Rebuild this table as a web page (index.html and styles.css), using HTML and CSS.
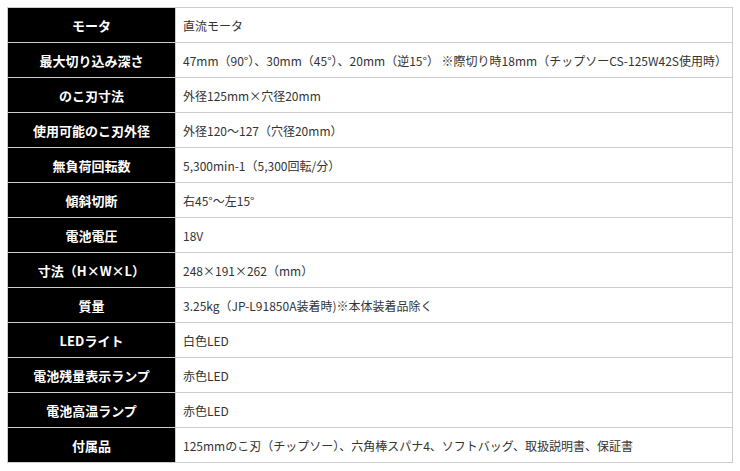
FILE: index.html
```html
<!DOCTYPE html>
<html lang="ja">
<head>
<meta charset="utf-8">
<link rel="stylesheet" href="styles.css">
</head>
<body>
<table class="spec">
<tr><th>モータ</th><td>直流モータ</td></tr>
<tr><th>最大切り込み深さ</th><td>47mm（90°）、30mm（45°）、20mm（逆15°） ※際切り時18mm（チップソーCS-125W42S使用時）</td></tr>
<tr><th>のこ刃寸法</th><td>外径125mm×穴径20mm</td></tr>
<tr><th>使用可能のこ刃外径</th><td>外径120～127（穴径20mm）</td></tr>
<tr><th>無負荷回転数</th><td>5,300min-1（5,300回転/分）</td></tr>
<tr><th>傾斜切断</th><td>右45°～左15°</td></tr>
<tr><th>電池電圧</th><td>18V</td></tr>
<tr><th>寸法（H×W×L）</th><td>248×191×262（mm）</td></tr>
<tr><th>質量</th><td>3.25kg（JP-L91850A装着時)※本体装着品除く</td></tr>
<tr><th>LEDライト</th><td>白色LED</td></tr>
<tr><th>電池残量表示ランプ</th><td>赤色LED</td></tr>
<tr><th>電池高温ランプ</th><td>赤色LED</td></tr>
<tr><th>付属品</th><td>125mmのこ刃（チップソー）、六角棒スパナ4、ソフトバッグ、取扱説明書、保証書</td></tr>
</table>
</body>
</html>
```
FILE: styles.css
```css
html, body {
  margin: 0;
  background: #fff;
}
body {
  padding: 7px;
  font-family: "Noto Sans CJK JP", "Liberation Sans", sans-serif;
  font-size: 12px;
}
.spec {
  border-collapse: collapse;
  width: 726px;
}
.spec th, .spec td {
  border: 1px solid #ccc;
  height: 34px;
  padding: 0;
}
.spec th {
  width: 167px;
  background: #000;
  color: #fff;
  font-size: 13px;
  font-weight: bold;
  text-align: center;
}
.spec td {
  color: #333;
  text-align: left;
  padding-left: 7px;
}
```
